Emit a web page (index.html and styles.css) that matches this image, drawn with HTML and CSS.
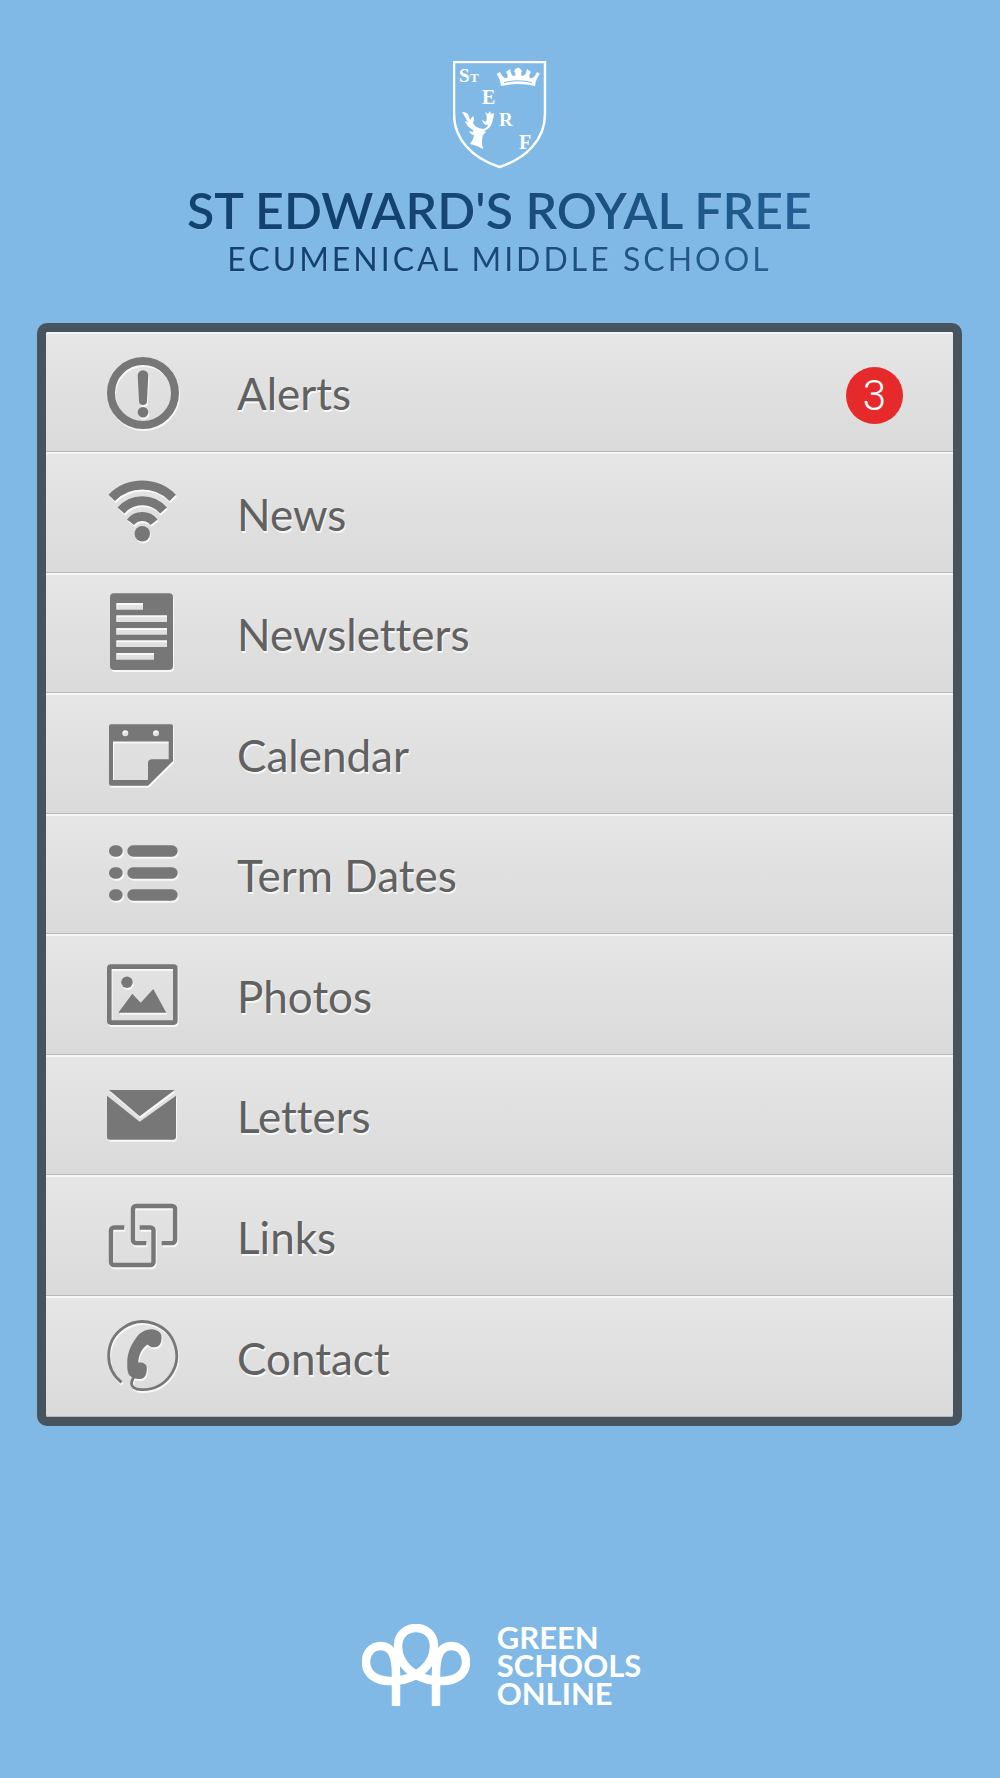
FILE: index.html
```html
<!DOCTYPE html>
<html lang="en">
<head>
<meta charset="utf-8">
<meta name="viewport" content="width=device-width, initial-scale=1">
<title>St Edward's Royal Free Ecumenical Middle School</title>
<link rel="stylesheet" href="styles.css">
</head>
<body>
<header class="school">
  <svg class="crest" viewBox="0 0 94 108" role="img" aria-label="School crest">
    <path class="crest-line" d="M1 1H92V53C92 78 74 97 46.500 106C19 97 1 78 1 53Z"/>
    <g class="crest-letters">
      <text x="6" y="21" font-size="19">S</text>
      <text x="17" y="21" font-size="13">T</text>
      <text x="29" y="43" font-size="20">E</text>
      <text x="46" y="65" font-size="19">R</text>
      <text x="66" y="88" font-size="20">F</text>
    </g>
    <path d="M48 25Q47 17 43.500 13L47 11Q50 18 54 17Q56 15 53 11L57 8Q58 15 61 15Q64 14 61 10Q65 3 69 10Q67 14 69 15Q73 15 74 8L78 11Q75 15 77 17Q81 18 84 11L87 13Q83 17 82 25Q65 21 48 25Z"/>
    <path class="crest-cut" d="M51 21.500Q65 18 79 21.500"/>
    <path d="M9 51Q13 51 15 53L17 59L20 55Q22 58 20 62Q22 66 26 67L30 68Q34 67 35 64Q30 64 29 59L33 61Q35 56 32 51L35 53L37 50L38 53L41 52Q40 62 37 66Q34 69 31 70L33 71L30 74Q28 80 30 88L24 85L17 83Q21 77 21 74Q18 74 16 70L20 71Q21 70 20 69Q13 65 12 60L15 61Z"/>
  </svg>
  <h1 class="school-name">ST EDWARD'S ROYAL FREE</h1>
  <p class="school-type">ECUMENICAL MIDDLE SCHOOL</p>
</header>

<nav class="menu" aria-label="Main">
  <a class="row" href="#alerts">
    <svg class="icon" viewBox="0 0 80 80" aria-hidden="true"><circle class="line" cx="39" cy="41" r="32" stroke-width="8"/><path d="M33.700 23.500a5.300 5.300 0 0 1 10.600 0L43 49a4 4 0 0 1-8 0Z"/><circle cx="39" cy="60.300" r="5.300"/></svg>
    <span class="label">Alerts</span>
    <span class="badge">3</span>
  </a>
  <a class="row" href="#news">
    <svg class="icon" viewBox="0 0 80 80" aria-hidden="true"><g class="line" stroke-width="9"><path d="M7.700 24.800A43 43 0 0 1 68.700 24.800"/><path d="M17 37.500A28 28 0 0 1 59.500 37.500"/><path d="M26.500 49.300A15 15 0 0 1 50 49.300"/></g><circle cx="38.300" cy="60.700" r="7.700"/></svg>
    <span class="label">News</span>
  </a>
  <a class="row" href="#newsletters">
    <svg class="icon" viewBox="0 0 80 80" aria-hidden="true"><path fill-rule="evenodd" d="M10 .3H65a4 4 0 0 1 4 4V73a4 4 0 0 1-4 4H10a4 4 0 0 1-4-4V4.300a4 4 0 0 1 4-4ZM12.300 10V16.700H39V10ZM12.300 22.300V29H63V22.300ZM12.300 35V41.700H63V35ZM12.300 47.300V54H63V47.300ZM12.300 60V66.700H50V60Z"/></svg>
    <span class="label">Newsletters</span>
  </a>
  <a class="row" href="#calendar">
    <svg class="icon" viewBox="0 0 80 80" aria-hidden="true"><path fill-rule="evenodd" d="M7 10.300H67a2 2 0 0 1 2 2V47L44 71.700H7a2 2 0 0 1-2-2V12.300a2 2 0 0 1 2-2ZM9 27.500V66H44V49Q44 45.300 48 45.300H64.700V27.500ZM18.300 19.300a3 3 0 1 0 6 0a3 3 0 1 0-6 0ZM49 19.300a3 3 0 1 0 6 0a3 3 0 1 0-6 0Z"/></svg>
    <span class="label">Calendar</span>
  </a>
  <a class="row" href="#term-dates">
    <svg class="icon" viewBox="0 0 80 80" aria-hidden="true"><rect x="5" y="11.300" width="13.700" height="11.400" rx="5.700"/><rect x="23.300" y="11.300" width="50.400" height="11.400" rx="5.700"/><rect x="5" y="33.300" width="13.700" height="11.400" rx="5.700"/><rect x="23.300" y="33.300" width="50.400" height="11.400" rx="5.700"/><rect x="5" y="55.300" width="13.700" height="11.400" rx="5.700"/><rect x="23.300" y="55.300" width="50.400" height="11.400" rx="5.700"/></svg>
    <span class="label">Term Dates</span>
  </a>
  <a class="row" href="#photos">
    <svg class="icon" viewBox="0 0 80 80" aria-hidden="true"><rect class="line" x="5.300" y="11.600" width="66" height="56" rx="1.500" stroke-width="4.600"/><circle cx="23" cy="27.300" r="5.700"/><path d="M14.300 57.700L28.300 38.700L36.700 47.700L49.300 34L62.300 57.700Z"/></svg>
    <span class="label">Photos</span>
  </a>
  <a class="row" href="#letters">
    <svg class="icon" viewBox="0 0 80 80" aria-hidden="true"><path d="M5 15H70.700L35.700 41.300Z"/><path d="M3 20.700L35.700 46.700L72 20.700V61.700a3 3 0 0 1-3 3H6a3 3 0 0 1-3-3Z"/></svg>
    <span class="label">Letters</span>
  </a>
  <a class="row" href="#links">
    <svg class="icon" viewBox="0 0 80 80" aria-hidden="true"><g class="line" stroke-width="4.400"><path d="M42.300 47.100H32a3 3 0 0 1-3-3V13a3 3 0 0 1 3-3H68.100a3 3 0 0 1 3 3V44.100a3 3 0 0 1-3 3H57.700"/><path d="M20.300 31.500H10a3 3 0 0 0-3 3V66a3 3 0 0 0 3 3H46.500a3 3 0 0 0 3-3V34.500a3 3 0 0 0-3-3H35.700"/></g></svg>
    <span class="label">Links</span>
  </a>
  <a class="row" href="#contact">
    <svg class="icon" viewBox="0 0 80 80" aria-hidden="true"><path class="line" stroke-width="2.800" d="M17.500 65.300A34 34 0 1 1 38.500 72.700C31 73 26 70 28 64L29.500 60"/><path d="M47.700 12.300C53 12.300 58 16 57.500 20C57.500 24 57 27 54.500 29C51 31 47 31 43.500 27.500C38 31 34.500 38 34.300 45.500C39 45 43 47 42.800 51C43 55 42 59 39.500 61C36 63 29 62 26 59C23 56 23.200 49 23.300 43C24 35 27 28 31 22.500C35 16 41 12.300 47.700 12.300Z"/></svg>
    <span class="label">Contact</span>
  </a>
</nav>

<footer class="maker">
  <svg class="maker-logo" viewBox="0 0 108 82" aria-hidden="true"><path d="M34 82V50C34 32 30 22 18.500 22C10 22 4 29 4 38C4 50 14 57 28 57C56 57 72 40 72 22C72 11 64 4 54 4C44 4 36 11 36 22C36 40 52 57 80 57C94 57 104 50 104 38C104 29 98 22 89.500 22C78 22 74 32 74 50V82"/></svg>
  <p class="maker-name">GREEN<br>SCHOOLS<br>ONLINE</p>
</footer>
</body>
</html>
```
FILE: styles.css
```css
* {
  box-sizing: border-box;
}

body {
  margin: 0;
  min-height: 100vh;
  padding: 61px 38px 71px 37px;
  display: flex;
  flex-direction: column;
  background: #80b9e6;
  font-family: Lato, sans-serif;
}

.school {
  display: flex;
  flex-direction: column;
  align-items: center;
  margin-bottom: 45px;
  text-align: center;
}

.crest {
  width: 94px;
  height: 108px;
  fill: #fff;
}

.crest-line {
  fill: none;
  stroke: #fff;
  stroke-width: 2.5;
}

.crest-cut {
  fill: none;
  stroke: #7fb9e7;
  stroke-width: 1;
}

.crest-letters {
  font-family: "Liberation Serif", serif;
  font-weight: 700;
}

.school-name,
.school-type {
  margin: 0;
  background: linear-gradient(90deg, #12426f 30%, #225f93);
  background-clip: text;
  -webkit-background-clip: text;
  color: transparent;
  filter: drop-shadow(1px 1px 0 #94bbe5);
}

.school-name {
  margin-top: 11px;
  font-size: 50px;
  font-weight: 600;
  line-height: 60px;
}

.school-type {
  font-size: 32px;
  font-weight: 400;
  line-height: 38px;
  letter-spacing: 3px;
}

.menu {
  border: 9px solid #48545d;
  border-radius: 10px;
  background: #48545d;
}

.row {
  display: flex;
  align-items: center;
  height: 120px;
  padding: 0 50px 0 58px;
  background: linear-gradient(#e6e6e6, #dadada);
  box-shadow: inset 0 2px #f6f6f6, inset 0 -1px #b8b8b8;
  color: #616161;
  text-decoration: none;
}

.row:nth-child(even),
.row:last-child {
  height: 121px;
}

.row:first-child {
  border-radius: 2px 2px 0 0;
}

.row:last-child {
  border-radius: 0 0 2px 2px;
}

.icon {
  flex: none;
  width: 80px;
  height: 80px;
  margin-right: 53px;
  fill: #777;
  filter: drop-shadow(1px 2px 0 #f8f8f8);
}

.line {
  fill: none;
  stroke: #777;
}

.label {
  flex: 1;
  padding-top: 2px;
  font-size: 44px;
  line-height: 54px;
  font-variant-ligatures: none;
  text-shadow: 1px 2px 0 #f8f8f8;
}

.badge {
  width: 57px;
  height: 57px;
  margin-top: 6px;
  border-radius: 50%;
  background: #e62a2b;
  color: #fff;
  font: 300 42px/57px Roboto, sans-serif;
  text-align: center;
}

.maker {
  display: flex;
  justify-content: center;
  align-items: center;
  gap: 27px;
  margin-top: auto;
  padding-left: 4px;
}

.maker-logo {
  width: 108px;
  height: 82px;
  fill: none;
  stroke: #fff;
  stroke-width: 8.5;
}

.maker-name {
  margin: 0;
  color: #fff;
  font-size: 31px;
  font-weight: 700;
  line-height: 28px;
}
```
